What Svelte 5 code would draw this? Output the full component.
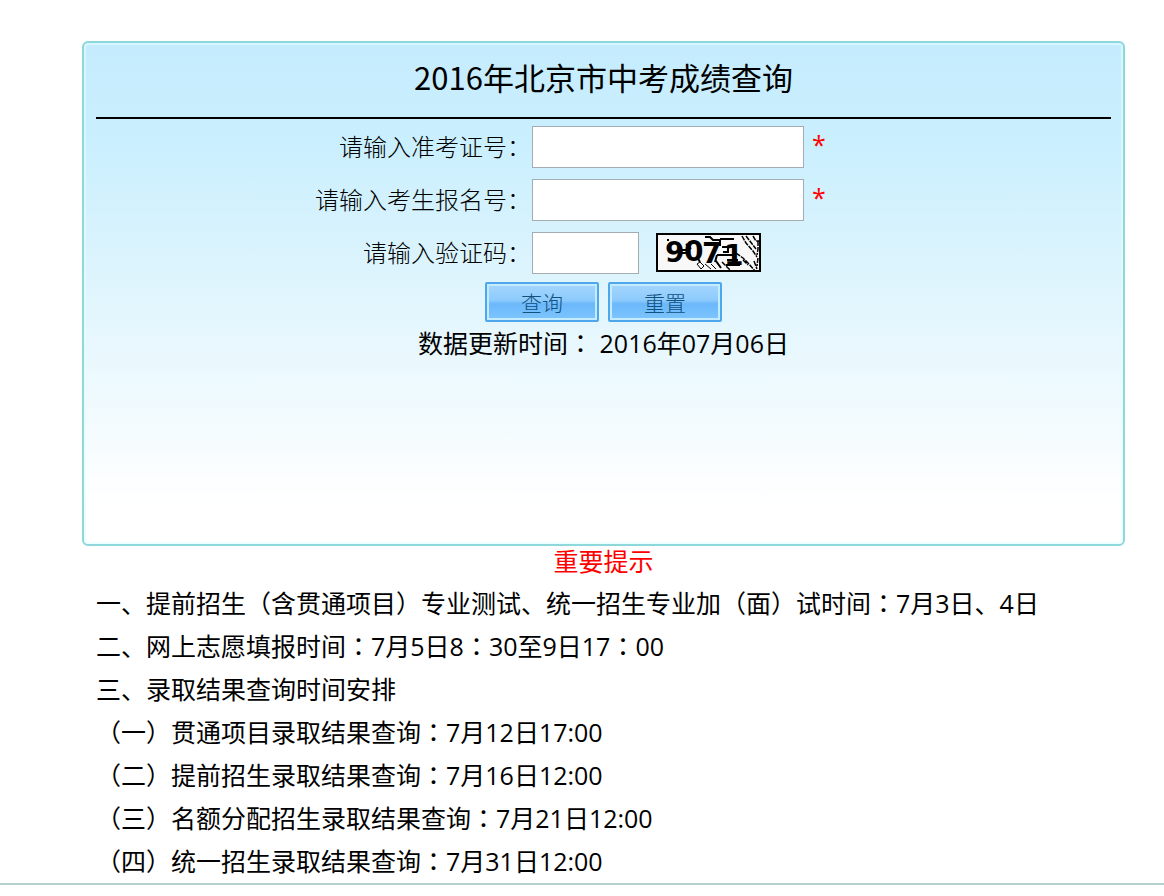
<script lang="ts">
    let ticket = $state('');
    let regNo = $state('');
    let code = $state('');

    const notices = [
        '一、提前招生（含贯通项目）专业测试、统一招生专业加（面）试时间：7月3日、4日',
        '二、网上志愿填报时间：7月5日8：30至9日17：00',
        '三、录取结果查询时间安排',
        '（一）贯通项目录取结果查询：7月12日17:00',
        '（二）提前招生录取结果查询：7月16日12:00',
        '（三）名额分配招生录取结果查询：7月21日12:00',
        '（四）统一招生录取结果查询：7月31日12:00'
    ];

    // full-width colons are set in the middle of their cell
    function split(line: string) {
        return line.split(/(：)/);
    }

    function submit(event: SubmitEvent) {
        event.preventDefault();
    }
</script>

{#snippet text(line: string)}
    {#each split(line) as part}{#if part === '：'}<span class="mid">{part}</span>{:else}{part}{/if}{/each}
{/snippet}

<main>
    <section class="panel">
        <h1>2016年北京市中考成绩查询</h1>
        <form onsubmit={submit}>
            <div class="row">
                <label for="ticket">请输入准考证号：</label>
                <div class="field">
                    <input id="ticket" type="text" bind:value={ticket} required />
                    <span class="star">*</span>
                </div>
            </div>
            <div class="row">
                <label for="regno">请输入考生报名号：</label>
                <div class="field">
                    <input id="regno" type="text" bind:value={regNo} required />
                    <span class="star">*</span>
                </div>
            </div>
            <div class="row">
                <label for="code">请输入验证码：</label>
                <div class="field">
                    <input id="code" class="short" type="text" bind:value={code} />
                    <svg class="captcha" viewBox="0 0 105 39" width="105" height="39">
                        <rect x="1" y="1" width="103" height="37" fill="#f8f8f8" stroke="#000" stroke-width="2" />
                        <g class="digits">
                            <text x="9" y="29">9</text>
                            <text x="28" y="28">0</text>
                            <text x="46" y="30">7</text>
                            <text x="68" y="32">1</text>
                        </g>
                        <g fill="none" stroke="#000" stroke-width="2">
                            <path d="M11 7h2M22 13l3 4h6M23 20h8M24 12v12M30 11l5 5M41 24l3 5M49 4h5l3 3h6" />
                            <path d="M64 6h14M64 6v7M66 14h6v5h-5M61 22h17M61 22l-2 7M60 28l5 7M70 32h14M71 27h11" />
                            <path d="M41 31l3-2 4 4-3 3zM49 31l6 5M55 31l5 5" stroke-width="1" />
                        </g>
                        <g fill="none" stroke="#000" stroke-width="1.5" stroke-dasharray="5 1">
                            <path d="M80 20l7 5 6 6 6 7M66 29l8 8M87 27l5 5M86 3l4 7 7 8 4 6M90 3l10 13M97 3l3 5h4" />
                            <path d="M102 8v8l-1 6M102 25l-1 8M98 28l3 8" />
                        </g>
                    </svg>
                </div>
            </div>
            <div class="buttons">
                <button type="submit">查询</button>
                <button type="reset">重置</button>
            </div>
        </form>
        <p class="updated">{@render text('数据更新时间： 2016年07月06日')}</p>
    </section>

    <section class="notice">
        <h2>重要提示</h2>
        {#each notices as line}
            <p>{@render text(line)}</p>
        {/each}
    </section>
</main>

<style>
    :global(body) {
        background: #fff;
    }

    main {
        padding: 41px 39px 0 82px;
        border-bottom: 2px solid #b6d0cb;
        font-family: "Open Sans", "Noto Sans CJK SC", sans-serif;
        font-size: 25px;
        line-height: 43px;
        color: #000;
    }

    h1, h2, p {
        margin: 0;
        font-weight: 400;
    }

    .mid {
        font-family: "Noto Sans CJK TC", sans-serif;
        line-height: 1;
    }

    .panel {
        box-sizing: border-box;
        min-height: 505px;
        padding: 10px 12px;
        border: 2px solid #8ed8dc;
        border-radius: 6px;
        background: linear-gradient(#c5ecfe 0, #caeffe 20%, #e0f5fd 50%, #fff 92%);
        box-shadow: inset 0 0 0 2px rgba(225, 255, 255, 0.6);
    }

    h1 {
        padding-bottom: 16px;
        border-bottom: 2px solid #000;
        font-family: "Noto Sans CJK SC", sans-serif;
        font-size: 31px;
        line-height: 48px;
        text-align: center;
    }

    form {
        padding-top: 1px;
    }

    .row {
        display: grid;
        grid-template-columns: 3fr 4fr;
        align-items: center;
        height: 53px;
    }

    label {
        font-family: "Noto Sans CJK SC", sans-serif;
        font-size: 24px;
        font-weight: 300;
        line-height: 40px;
        padding-bottom: 2px;
        text-align: right;
    }

    .field {
        display: flex;
        align-items: center;
    }

    input {
        box-sizing: border-box;
        width: 272px;
        height: 42px;
        margin: 0 0 0 1px;
        padding: 0 6px;
        border: 1px solid #a3abb3;
        background: #fff;
        font: inherit;
    }

    input.short {
        width: 107px;
    }

    .star {
        align-self: flex-start;
        margin-left: 8px;
        line-height: 36px;
        color: #f00;
    }

    .captcha {
        margin-left: 17px;
    }

    .digits {
        font-family: "DejaVu Sans", sans-serif;
        font-size: 28px;
        font-weight: 700;
    }

    .buttons {
        display: flex;
        justify-content: center;
        gap: 9px;
        padding-top: 3px;
    }

    button {
        width: 114px;
        height: 40px;
        padding: 0;
        border: 2px solid #4ea7ea;
        border-radius: 2px;
        background: linear-gradient(#a5d6fd 0, #8dcbfd 45%, #6bb8fb 55%, #7dc5fe 100%);
        box-shadow: inset 0 0 0 2px #c4ebff;
        font-family: "Noto Sans CJK SC", sans-serif;
        font-size: 21px;
        font-weight: 300;
        line-height: 36px;
        color: #12507e;
    }

    .updated {
        text-align: center;
    }

    .notice {
        padding: 0 14px;
    }

    h2 {
        padding-bottom: 6px;
        font-size: 25px;
        line-height: 30px;
        color: #f00;
        text-align: center;
    }
</style>
